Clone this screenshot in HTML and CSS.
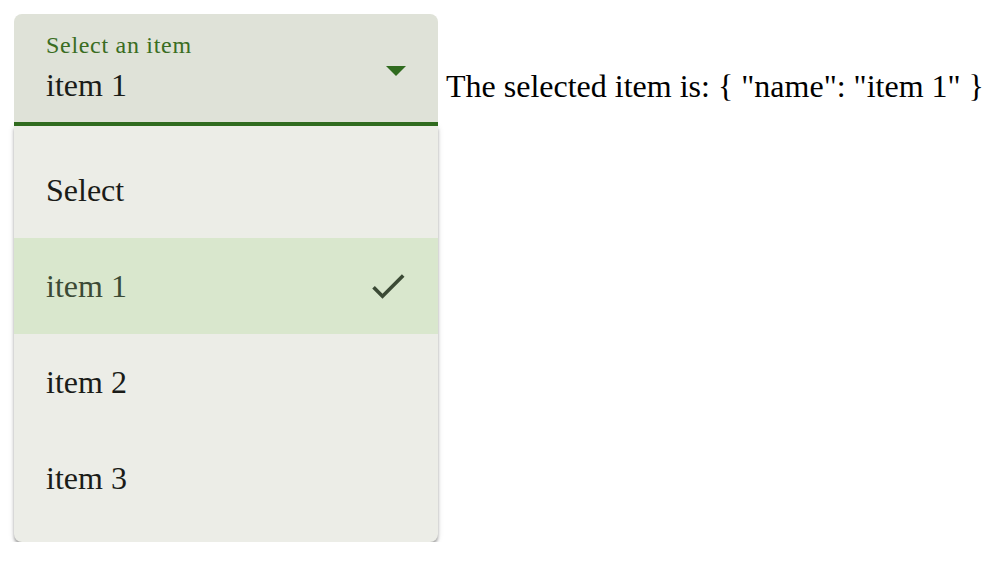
FILE: index.html
```html
<!DOCTYPE html>
<html>
<head>
<meta charset="utf-8">
<link rel="stylesheet" href="styles.css">
</head>
<body>
<div class="page">
  <div class="select">
    <div class="field">
      <div class="field-text">
        <div class="label">Select an item</div>
        <div class="value">item 1</div>
      </div>
      <span class="arrow"></span>
    </div>
    <div class="menu">
      <div class="option">Select</div>
      <div class="option selected"><span>item 1</span>
        <svg class="check" viewBox="0 0 24 24"><path d="M9 16.17L4.83 12l-1.42 1.41L9 19 21 7l-1.41-1.41z"/></svg>
      </div>
      <div class="option">item 2</div>
      <div class="option">item 3</div>
    </div>
  </div>
  <p class="result">The selected item is: { "name": "item 1" }</p>
</div>
</body>
</html>
```
FILE: styles.css
```css
html, body {
  margin: 0;
  padding: 0;
  background: #ffffff;
}
body {
  font-family: "Liberation Serif", "Times New Roman", serif;
  color: #000;
}
.page {
  display: flex;
  align-items: flex-start;
  padding: 14px 0 0 14px;
  gap: 8px;
}
.select {
  display: flex;
  flex-direction: column;
  width: 424px;
  flex: none;
}
.field {
  display: flex;
  align-items: center;
  justify-content: space-between;
  background: #dfe2d8;
  border-radius: 8px 8px 0 0;
  border-bottom: 4px solid #306b1f;
  padding: 15px 32px 13px 32px;
  height: 80px;
  position: relative;
  z-index: 1;
}
.label {
  font-size: 24px;
  line-height: 32px;
  color: #3a6d22;
  letter-spacing: 0.7px;
}
.value {
  font-size: 32px;
  line-height: 48px;
  color: #1a1c18;
}
.arrow {
  width: 0;
  height: 0;
  border-left: 10px solid transparent;
  border-right: 10px solid transparent;
  border-top: 10px solid #306b1f;
  margin-top: 4px;
}
.menu {
  padding: 16px 0;
  background: #ecede7;
  border-radius: 0 0 8px 8px;
  box-shadow: 0 3px 3px rgba(0,0,0,0.3), 0 1px 6px rgba(0,0,0,0.12);
}
.option {
  height: 96px;
  display: flex;
  align-items: center;
  justify-content: space-between;
  padding: 0 28px 0 32px;
  font-size: 32px;
  color: #1a1c18;
}
.option.selected {
  background: #d9e7cd;
  color: #3b4a35;
}
.check {
  width: 44px;
  height: 44px;
  fill: #3b4a35;
}
.result {
  margin: 48px 0 0 0;
  font-size: 32px;
  line-height: 48px;
}
```
